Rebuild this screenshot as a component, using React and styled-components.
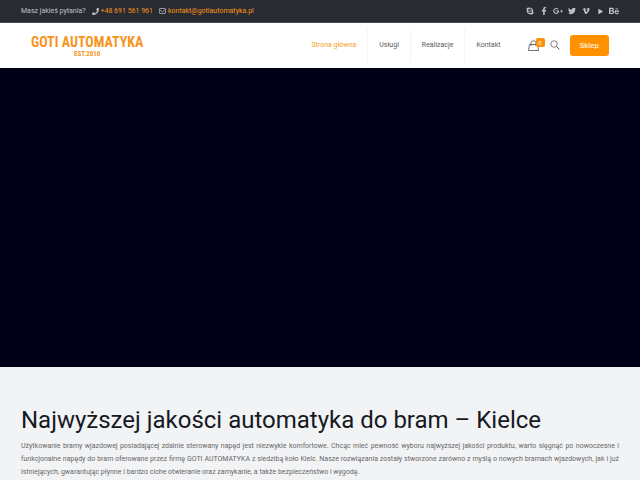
import React from 'react';
import styled, { createGlobalStyle } from 'styled-components';
import {
  FaPhone,
  FaSkype,
  FaFacebookF,
  FaGooglePlusG,
  FaTwitter,
  FaVimeoV,
  FaPlay,
  FaBehance,
} from 'react-icons/fa';

const GlobalStyle = createGlobalStyle`
  * {
    box-sizing: border-box;
  }

  body {
    margin: 0;
    background-color: #f1f3f5;
    color: #686868;
    font-family: Roboto, "Liberation Sans", sans-serif;
    font-size: 7px;
    line-height: 13px;
  }

  a {
    color: inherit;
    text-decoration: none;
  }
`;

const TopBar = styled.div`
  display: flex;
  justify-content: space-between;
  align-items: center;
  height: 23px;
  padding: 0 21px;
  border-bottom: 1px solid #4a4b52;
  background-color: #292b33;
  color: #c0c0c4;
`;

const ContactList = styled.div`
  display: flex;
  align-items: center;
  gap: 6px;
`;

const ContactItem = styled.span`
  display: flex;
  align-items: center;
  gap: 2px;

  a {
    color: #f79414;
  }
`;

const SocialList = styled.nav`
  display: flex;
  align-items: center;
  gap: 4px;
`;

const SocialLink = styled.a`
  display: flex;
  justify-content: center;
  width: 10px;
  font-size: ${(props) => props.$size || 8}px;
`;

const Header = styled.header`
  display: flex;
  justify-content: space-between;
  align-items: center;
  height: 45px;
  padding: 0 31px;
  background-color: #fff;
`;

const Logo = styled.a`
  display: flex;
  flex-direction: column;
  align-items: center;
  color: #f7941d;
  font-family: "Roboto Condensed", Roboto, sans-serif;
  font-weight: bold;
`;

const LogoName = styled.span`
  font-size: 14px;
  line-height: 16px;
`;

const LogoYear = styled.span`
  font-size: 7px;
  line-height: 8px;
`;

const HeaderRight = styled.div`
  display: flex;
  align-items: center;
  padding-bottom: 1px;
`;

const Menu = styled.nav`
  display: flex;
  margin-right: 16px;
`;

const MenuLink = styled.a`
  padding: 11px;
  border-left: 1px solid ${(props) => (props.$first ? 'transparent' : '#f6f6f6')};
  color: ${(props) => (props.$active ? '#f7a11a' : '#5c5c5c')};
`;

const CartLink = styled.a`
  position: relative;
  display: flex;
  margin-right: 11px;
`;

const CartCount = styled.span`
  position: absolute;
  top: -2px;
  right: -6px;
  width: 9px;
  height: 9px;
  border-radius: 2px;
  background-color: #ff9100;
  color: #fff;
  font-size: 6px;
  line-height: 9px;
  text-align: center;
`;

const SearchButton = styled.button`
  display: flex;
  margin-right: 10px;
  padding: 0;
  border: none;
  background: none;
`;

const ShopLink = styled.a`
  padding: 4px 10px;
  border-radius: 3px;
  background-color: #ff9100;
  color: #fff;
  font-size: 8px;
`;

const Hero = styled.section`
  height: 299px;
  background-color: #000016;
`;

const Intro = styled.section`
  padding: 38px 21px 24px;
`;

const Title = styled.h1`
  margin: 0 0 5px;
  color: #161922;
  font-size: 24px;
  font-weight: 400;
  line-height: 30px;
`;

const Text = styled.p`
  margin: 0;
  text-align: justify;
`;

const socials = [
  { name: 'Skype', icon: FaSkype },
  { name: 'Facebook', icon: FaFacebookF },
  { name: 'Google+', icon: FaGooglePlusG, size: 10 },
  { name: 'Twitter', icon: FaTwitter },
  { name: 'Vimeo', icon: FaVimeoV },
  { name: 'YouTube', icon: FaPlay, size: 5 },
  { name: 'Behance', icon: FaBehance, size: 10 },
];

const menu = ['Strona główna', 'Usługi', 'Realizacje', 'Kontakt'];

const MailIcon = () => (
  <svg width="7" height="6" viewBox="0 0 14 12" fill="none" stroke="currentColor" strokeWidth="1.4">
    <rect x="1" y="1" width="12" height="10" rx="1" />
    <path d="M1 3l6 5 6-5" />
  </svg>
);

const BagIcon = () => (
  <svg width="11" height="11" viewBox="0 0 22 22" fill="none" stroke="#444" strokeWidth="1.5">
    <path d="M3 9h16l2 12H1z" />
    <path d="M6 12V6c0-6 10-6 10 0v6" />
  </svg>
);

const SearchIcon = () => (
  <svg width="10" height="10" viewBox="0 0 20 20" fill="none" stroke="#555" strokeWidth="1.4">
    <circle cx="8" cy="8" r="6.5" />
    <path d="M13 13l6 6" strokeWidth="2" />
  </svg>
);

const App = () => {
  return (
    <>
      <GlobalStyle />
      <TopBar>
        <ContactList>
          <span>Masz jakieś pytania?</span>
          <ContactItem>
            <FaPhone size={7} />
            <a href="tel:+48691561961">+48 691 561 961</a>
          </ContactItem>
          <ContactItem>
            <MailIcon />
            <a href="mailto:kontakt@gotiautomatyka.pl">kontakt@gotiautomatyka.pl</a>
          </ContactItem>
        </ContactList>
        <SocialList>
          {socials.map(({ name, icon: Icon, size }) => (
            <SocialLink key={name} href="#" aria-label={name} $size={size}>
              <Icon />
            </SocialLink>
          ))}
        </SocialList>
      </TopBar>
      <Header>
        <Logo href="#">
          <LogoName>GOTI AUTOMATYKA</LogoName>
          <LogoYear>EST.2010</LogoYear>
        </Logo>
        <HeaderRight>
          <Menu>
            {menu.map((label, index) => (
              <MenuLink key={label} href="#" $first={index === 0} $active={index === 0}>
                {label}
              </MenuLink>
            ))}
          </Menu>
          <CartLink href="#" aria-label="Koszyk">
            <BagIcon />
            <CartCount>0</CartCount>
          </CartLink>
          <SearchButton type="button" aria-label="Szukaj">
            <SearchIcon />
          </SearchButton>
          <ShopLink href="#">Sklep</ShopLink>
        </HeaderRight>
      </Header>
      <Hero />
      <Intro>
        <Title>Najwyższej jakości automatyka do bram – Kielce</Title>
        <Text>
          Użytkowanie bramy wjazdowej posiadającej zdalnie sterowany napęd jest niezwykle
          komfortowe. Chcąc mieć pewność wyboru najwyższej jakości produktu, warto sięgnąć po
          nowoczesne i funkcjonalne napędy do bram oferowane przez firmę GOTI AUTOMATYKA z siedzibą
          koło Kielc. Nasze rozwiązania zostały stworzone zarówno z myślą o nowych bramach
          wjazdowych, jak i już istniejących, gwarantując płynne i bardzo ciche otwieranie oraz
          zamykanie, a także bezpieczeństwo i wygodę.
        </Text>
      </Intro>
    </>
  );
};

export default App;
